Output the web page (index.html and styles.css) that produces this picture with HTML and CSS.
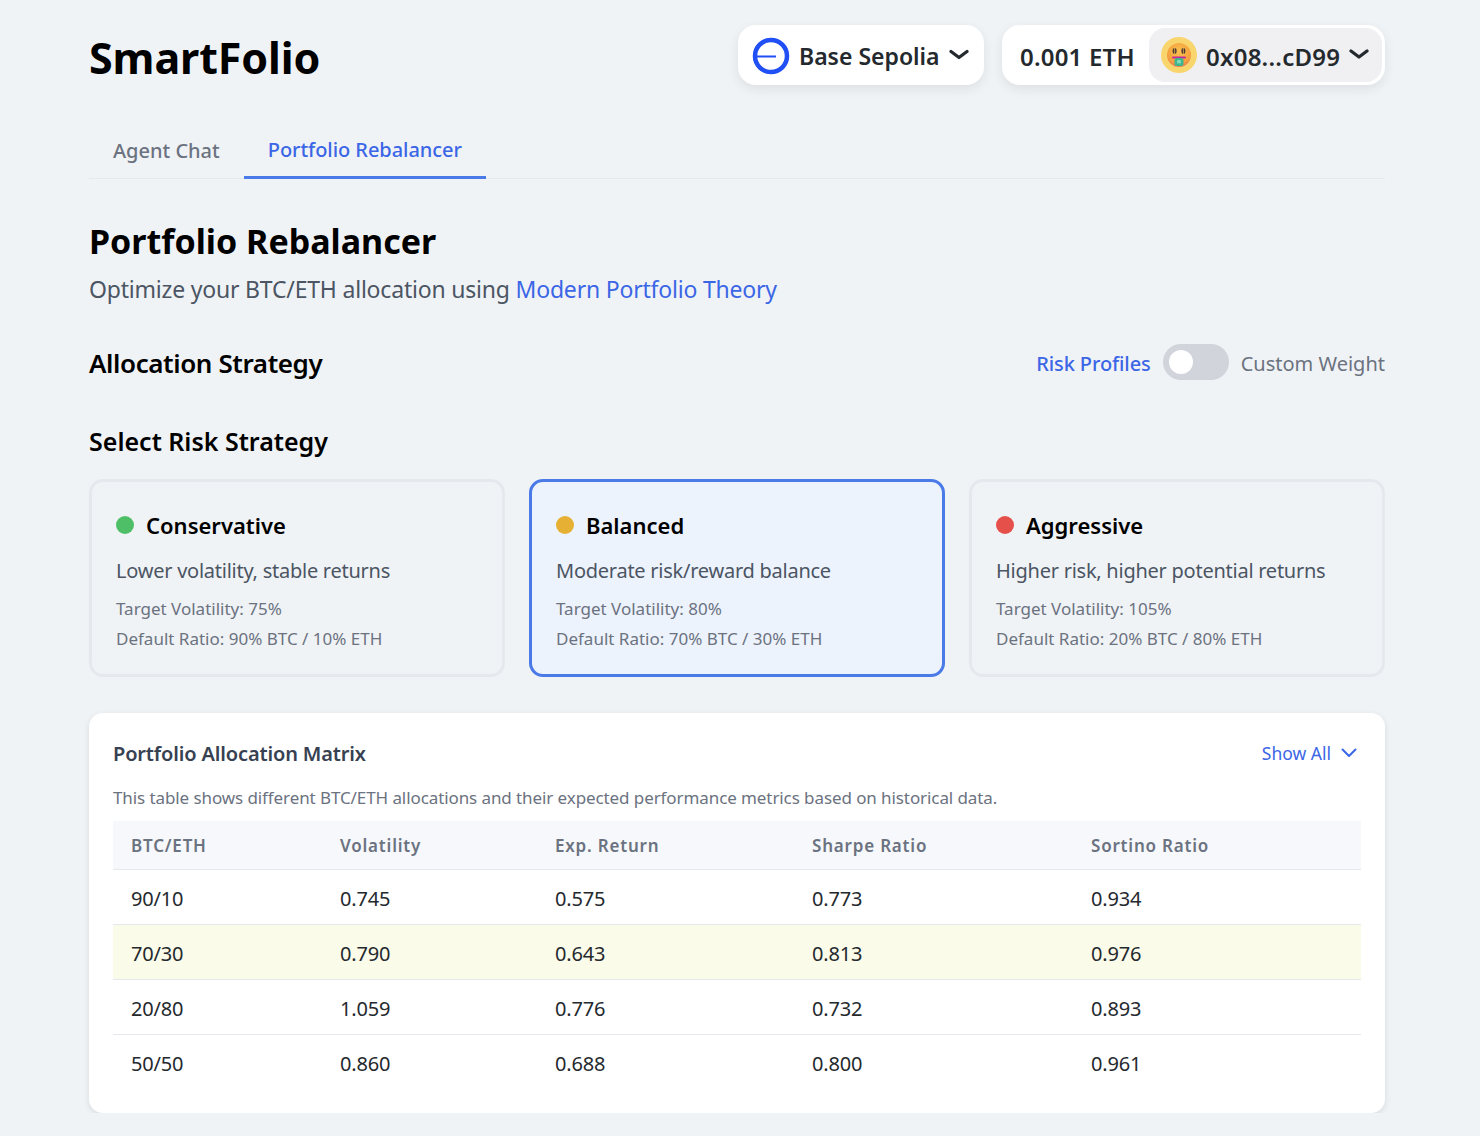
FILE: index.html
```html
<!DOCTYPE html>
<html lang="en">
<head>
  <meta charset="UTF-8" />
  <title>SmartFolio</title>
  <link rel="stylesheet" href="styles.css">
</head>
<body>
<div class="page">
  <header class="topbar">
    <h1 class="brand">SmartFolio</h1>
    <div class="wallet-area">
      <button class="pill network">
        <svg class="base-logo" width="38" height="38" viewBox="0 0 38 38">
          <circle cx="19" cy="19" r="16" fill="none" stroke="#1f4ff5" stroke-width="4.500"/>
          <rect x="5" y="18.500" width="19" height="2" fill="#1f4ff5"/>
        </svg>
        <span>Base Sepolia</span>
        <svg class="caret" width="20" height="20" viewBox="0 0 20 20"><path d="M2 5.500 10 11.500l8-6" fill="none" stroke="#24292e" stroke-width="3.200" stroke-linecap="round" stroke-linejoin="round"/></svg>
      </button>
      <div class="pill account">
        <span class="balance">0.001 ETH</span>
        <button class="address">
          <span class="avatar">
            <svg width="26" height="26" viewBox="0 0 26 26">
              <defs>
                <radialGradient id="face" cx="50%" cy="35%" r="70%">
                  <stop offset="0" stop-color="#fbc04e"/>
                  <stop offset="0.7" stop-color="#f4a13e"/>
                  <stop offset="1" stop-color="#e2705a"/>
                </radialGradient>
              </defs>
              <circle cx="13" cy="13" r="12" fill="url(#face)"/>
              <ellipse cx="8.600" cy="9" rx="2" ry="3" fill="#4a3a36"/>
              <ellipse cx="17.400" cy="9" rx="2" ry="3" fill="#4a3a36"/>
              <path d="M8.600 5.500v7M17.400 5.500v7" stroke="#fbc04e" stroke-width="0.700"/>
              <rect x="6" y="14.500" width="14" height="2" rx="1" fill="#c02a9c"/>
              <rect x="8.500" y="16" width="9" height="8" rx="2.500" fill="#3fb58f"/>
              <rect x="11" y="18" width="4" height="3.500" rx="1" fill="#7fdcb8"/>
            </svg>
          </span>
          <span class="address-text">0x08...cD99</span>
          <svg class="caret" width="20" height="20" viewBox="0 0 20 20"><path d="M2 6 10 12l8-6" fill="none" stroke="#24292e" stroke-width="3.200" stroke-linecap="round" stroke-linejoin="round"/></svg>
        </button>
      </div>
    </div>
  </header>

  <nav class="tabs">
    <a class="tab">Agent Chat</a>
    <a class="tab active">Portfolio Rebalancer</a>
  </nav>

  <section class="intro">
    <h2>Portfolio Rebalancer</h2>
    <p>Optimize your BTC/ETH allocation using <a class="link">Modern Portfolio Theory</a></p>
  </section>

  <div class="strategy-head">
    <h3>Allocation Strategy</h3>
    <div class="mode-switch">
      <span class="mode on">Risk Profiles</span>
      <span class="toggle"><span class="knob"></span></span>
      <span class="mode">Custom Weight</span>
    </div>
  </div>

  <h4 class="select-title">Select Risk Strategy</h4>

  <div class="cards">
    <div class="card">
      <div class="card-title"><span class="dot green"></span>Conservative</div>
      <p class="card-desc">Lower volatility, stable returns</p>
      <p class="card-meta">Target Volatility: 75%</p>
      <p class="card-meta">Default Ratio: 90% BTC / 10% ETH</p>
    </div>
    <div class="card selected">
      <div class="card-title"><span class="dot yellow"></span>Balanced</div>
      <p class="card-desc">Moderate risk/reward balance</p>
      <p class="card-meta">Target Volatility: 80%</p>
      <p class="card-meta">Default Ratio: 70% BTC / 30% ETH</p>
    </div>
    <div class="card">
      <div class="card-title"><span class="dot red"></span>Aggressive</div>
      <p class="card-desc">Higher risk, higher potential returns</p>
      <p class="card-meta">Target Volatility: 105%</p>
      <p class="card-meta">Default Ratio: 20% BTC / 80% ETH</p>
    </div>
  </div>

  <section class="matrix">
    <div class="matrix-head">
      <h5>Portfolio Allocation Matrix</h5>
      <a class="show-all">Show All
        <svg width="20" height="20" viewBox="0 0 20 20"><path d="M3.500 6.500 10 13l6.500-6.500" fill="none" stroke="#3b66e6" stroke-width="2" stroke-linecap="round" stroke-linejoin="round"/></svg>
      </a>
    </div>
    <p class="matrix-note">This table shows different BTC/ETH allocations and their expected performance metrics based on historical data.</p>
    <table>
      <thead>
        <tr><th class="c1">BTC/ETH</th><th class="c2">Volatility</th><th class="c3">Exp. Return</th><th class="c4">Sharpe Ratio</th><th>Sortino Ratio</th></tr>
      </thead>
      <tbody>
        <tr><td>90/10</td><td>0.745</td><td>0.575</td><td>0.773</td><td>0.934</td></tr>
        <tr class="hl"><td>70/30</td><td>0.790</td><td>0.643</td><td>0.813</td><td>0.976</td></tr>
        <tr><td>20/80</td><td>1.059</td><td>0.776</td><td>0.732</td><td>0.893</td></tr>
        <tr><td>50/50</td><td>0.860</td><td>0.688</td><td>0.800</td><td>0.961</td></tr>
      </tbody>
    </table>
  </section>
</div>
</body>
</html>
```

FILE: styles.css
```css
* {
  box-sizing: border-box;
}

body {
  margin: 0;
  background: #f0f3f6;
  font-family: "Noto Sans", "Open Sans", sans-serif;
  color: #000;
}

h1, h2, h3, h4, h5, p {
  margin: 0;
}

.page {
  width: 1296px;
  margin-left: 89px;
  padding-top: 25px;
}

.topbar {
  display: flex;
  justify-content: space-between;
  height: 60px;
}

.brand {
  font-size: 43px;
  font-weight: 700;
  letter-spacing: -0.1px;
  line-height: 66px;
}

.wallet-area {
  display: flex;
  gap: 18px;
}

.pill {
  display: flex;
  align-items: center;
  height: 60px;
  background: #fff;
  border: none;
  border-radius: 18px;
  box-shadow: 0 4px 12px rgba(0, 0, 0, 0.08);
  font: inherit;
  font-size: 23px;
  font-weight: 600;
  color: #24292e;
}

.network {
  width: 246px;
  padding: 2px 14px 0;
  gap: 9px;
}

.account {
  width: 383px;
  padding: 3px 3px 3px 18px;
  justify-content: space-between;
  font-size: 24px;
}

.balance {
  margin-top: 2px;
  letter-spacing: 0.2px;
}

.address {
  display: flex;
  align-items: center;
  gap: 9px;
  height: 54px;
  width: 233px;
  padding: 0 12px;
  background: #f0f0f3;
  border: none;
  border-radius: 16px;
  font: inherit;
  color: inherit;
}

.address-text {
  margin-top: 2px;
  letter-spacing: 0.25px;
}

.avatar {
  display: flex;
  align-items: center;
  justify-content: center;
  flex: none;
  width: 36px;
  height: 36px;
  border-radius: 50%;
  background: #f9d56e;
}

.tabs {
  display: flex;
  align-items: flex-end;
  height: 69px;
  margin-top: 25px;
  border-bottom: 1px solid #e5e9ee;
}

.tab {
  padding: 0 24px 13px;
  font-size: 20px;
  font-weight: 500;
  color: #6b7280;
  line-height: 28px;
}

.tab.active {
  padding-bottom: 12px;
  letter-spacing: -0.05px;
  color: #3b66e6;
  border-bottom: 3px solid #4a7ae8;
  margin-bottom: -1px;
}

.intro {
  margin-top: 37px;
}

.intro h2 {
  font-size: 34px;
  font-weight: 700;
  line-height: 50px;
}

.intro p {
  margin-top: 5px;
  font-size: 23px;
  letter-spacing: -0.2px;
  line-height: 36px;
  color: #4b5563;
}

.link {
  color: #3b66e6;
}

.strategy-head {
  display: flex;
  justify-content: space-between;
  align-items: center;
  margin-top: 36px;
  height: 40px;
}

.strategy-head h3 {
  font-size: 26px;
  font-weight: 600;
  letter-spacing: -0.4px;
}

.mode-switch {
  display: flex;
  align-items: center;
  gap: 12px;
}

.mode {
  font-size: 20px;
  color: #6b7280;
}

.mode.on {
  color: #3b66e6;
  font-weight: 500;
  letter-spacing: -0.1px;
}

.toggle {
  display: block;
  width: 66px;
  height: 36px;
  margin-bottom: 2px;
  padding: 6px;
  border-radius: 18px;
  background: #d1d5db;
}

.knob {
  display: block;
  width: 24px;
  height: 24px;
  border-radius: 50%;
  background: #fff;
}

.select-title {
  margin-top: 38px;
  font-size: 25px;
  font-weight: 600;
  line-height: 40px;
}

.cards {
  display: grid;
  grid-template-columns: repeat(3, 416px);
  gap: 24px;
  margin-top: 18px;
}

.card {
  height: 198px;
  padding: 26px 24px;
  border: 3px solid #e5e9ee;
  border-radius: 14px;
}

.card.selected {
  border-color: #4a7ae8;
  background: #edf3fd;
}

.card-title {
  display: flex;
  align-items: center;
  gap: 12px;
  font-size: 22px;
  font-weight: 600;
  line-height: 34px;
}

.dot {
  width: 18px;
  height: 18px;
  border-radius: 50%;
}

.green { background: #4fbf67; }
.yellow { background: #e6b034; }
.red { background: #e5504a; }

.card-desc {
  margin-top: 11px;
  font-size: 20px;
  letter-spacing: -0.25px;
  line-height: 36px;
  color: #4b5563;
}

.card-meta {
  font-size: 17px;
  line-height: 30px;
  color: #6b7280;
}

.card-desc + .card-meta {
  margin-top: 5px;
}

.matrix {
  margin-top: 36px;
  height: 400px;
  padding: 24px;
  background: #fff;
  border-radius: 14px;
  box-shadow: 0 2px 6px rgba(0, 0, 0, 0.1);
}

.matrix-head {
  display: flex;
  justify-content: space-between;
  align-items: center;
  height: 32px;
}

.matrix-head h5 {
  font-size: 20px;
  font-weight: 600;
  letter-spacing: -0.15px;
  color: #374151;
}

.show-all {
  display: flex;
  align-items: center;
  gap: 8px;
  padding-right: 2px;
  font-size: 17.500px;
  color: #3b66e6;
}

.matrix-note {
  margin-top: 14px;
  font-size: 17px;
  letter-spacing: -0.09px;
  line-height: 30px;
  color: #6b7280;
}

table {
  width: 100%;
  margin-top: 8px;
  border-collapse: collapse;
}

th {
  height: 48px;
  padding: 2px 18px 0;
  background: #f6f8fb;
  border-bottom: 1px solid #e5e9ee;
  text-align: left;
  font-size: 17px;
  font-weight: 600;
  letter-spacing: 0.8px;
  color: #6b7280;
}

.c1 { width: 209px; }
.c2 { width: 215px; }
.c3 { width: 257px; }
.c4 { width: 279px; }

td {
  height: 55px;
  padding: 4px 18px 0;
  border-bottom: 1px solid #e5e9ee;
  font-size: 20px;
  letter-spacing: -0.2px;
  color: #24292e;
}

tbody tr:last-child td {
  border-bottom: none;
}

.hl td {
  background: #fbfbe9;
}
```
